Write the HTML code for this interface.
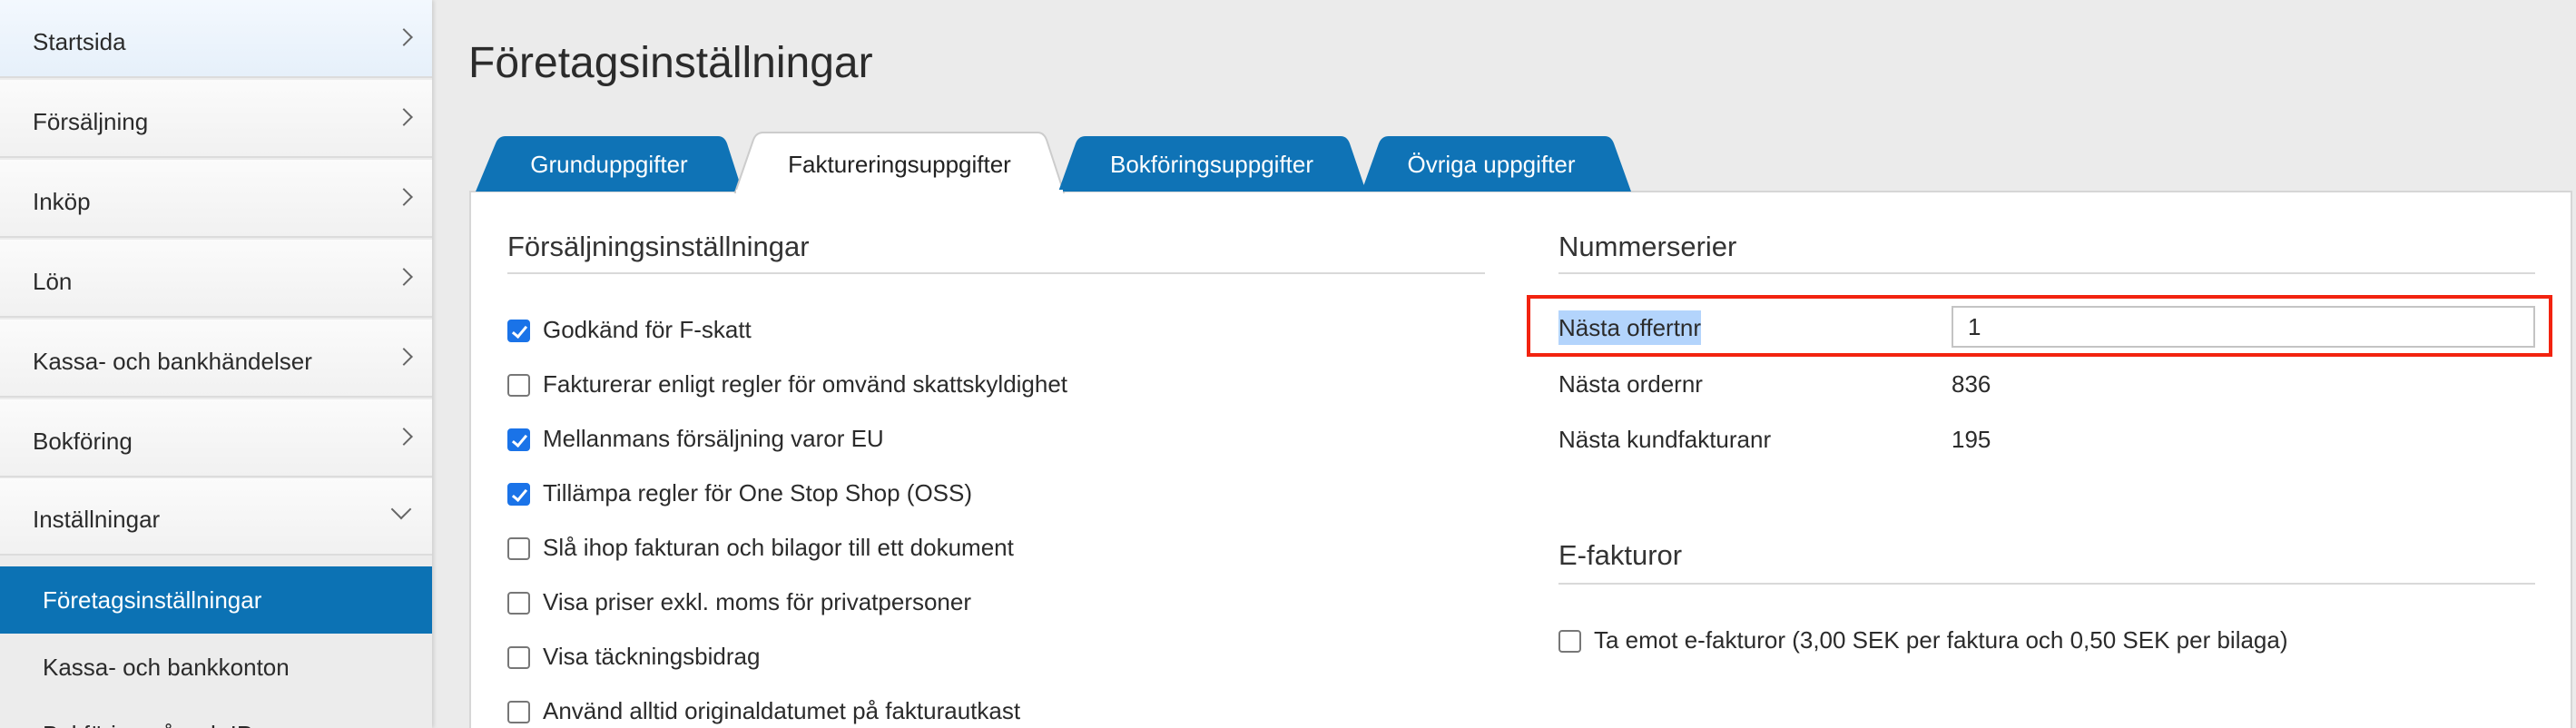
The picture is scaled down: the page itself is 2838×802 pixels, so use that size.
<!DOCTYPE html>
<html style="overflow:hidden;width:2838px;height:802px"><head><meta charset="utf-8"><style>
*{margin:0;padding:0;box-sizing:border-box}
body{width:2838px;height:802px;overflow:hidden;background:#ebebeb;font-family:"Liberation Sans",sans-serif;color:#2b2b2b;position:relative}
.sb{position:absolute;left:0;top:0;width:476px;height:802px;background:#ececec;box-shadow:2px 0 4px rgba(0,0,0,.12)}
.it{position:absolute;left:0;width:476px;height:86px;background:linear-gradient(#fbfbfb,#f1f1f1);border-bottom:2px solid #dcdcdc;font-size:26px;line-height:92px;padding-left:36px}
.it .ch{position:absolute;left:438px;top:34px;width:14px;height:14px;border-right:2px solid #666;border-top:2px solid #666;transform:rotate(45deg)}
.it .dn{position:absolute;left:434px;top:26px;width:16px;height:16px;border-right:2px solid #666;border-bottom:2px solid #666;transform:rotate(45deg)}
.act{position:absolute;left:0;top:624px;width:476px;height:74px;background:#0c72b4;color:#fff;font-size:26px;line-height:74px;padding-left:47px}
.sub{position:absolute;left:47px;top:712px;font-size:26px;line-height:46px}
.t{position:absolute;white-space:nowrap}
.panel{position:absolute;left:517px;top:210px;width:2317px;height:592px;background:#fff;border:2px solid #d6d6d6;border-bottom:none}
.h{font-size:31px;color:#333}
.hr{position:absolute;height:2px;background:#d9d9d9}
.cb{position:absolute;width:25px;height:25px;border:2px solid #777;border-radius:4px;background:#fff}
.cb.on{background:#1a73e8;border-color:#1a73e8}
.cb.on:after{content:"";position:absolute;left:7px;top:2px;width:6px;height:13px;border-right:3px solid #fff;border-bottom:3px solid #fff;transform:rotate(40deg)}
.lb{font-size:26px;color:#2b2b2b}
</style></head><body>
<div class="sb">
<div class="it" style="top:0;background:linear-gradient(#f3f8fe,#e6f0fa)">Startsida<span class="ch"></span></div>
<div class="it" style="top:88px">Försäljning<span class="ch"></span></div>
<div class="it" style="top:176px">Inköp<span class="ch"></span></div>
<div class="it" style="top:264px">Lön<span class="ch"></span></div>
<div class="it" style="top:352px">Kassa- och bankhändelser<span class="ch"></span></div>
<div class="it" style="top:440px">Bokföring<span class="ch"></span></div>
<div class="it" style="top:527px;height:85px;line-height:90px">Inställningar<span class="dn"></span></div>
<div class="act">Företagsinställningar</div>
<div class="sub">Kassa- och bankkonton</div>
<div class="sub" style="top:786px">Bokföring på ordr IP</div>
</div>
<div class="t" style="left:516px;top:42px;font-size:48px;color:#2b2b2b">Företagsinställningar</div>
<div class="panel"></div>
<svg style="position:absolute;left:0;top:0" width="2838" height="214">
<path d="M524 211 L546 158 Q549 150 557 150 L791 150 Q798 150 801 158 L818 211 Z" fill="#0f73b6"/>
<path d="M810 212 L830 154 Q833 146 841 146 L1143 146 Q1150 146 1153 154 L1172 212 Z" fill="#fff" stroke="#ccc" stroke-width="2"/>
<path d="M1166 211 L1185 158 Q1188 150 1196 150 L1477 150 Q1484 150 1487 158 L1505 211 Z" fill="#0f73b6"/>
<path d="M1500 211 L1519 158 Q1522 150 1530 150 L1768 150 Q1775 150 1778 158 L1797 211 Z" fill="#0f73b6"/>
<rect x="811" y="209" width="360" height="4" fill="#fff"/>
<text x="671" y="190" font-family="Liberation Sans" font-size="26" fill="#fff" text-anchor="middle">Grunduppgifter</text>
<text x="991" y="190" font-family="Liberation Sans" font-size="26" fill="#222" text-anchor="middle">Faktureringsuppgifter</text>
<text x="1335" y="190" font-family="Liberation Sans" font-size="26" fill="#fff" text-anchor="middle">Bokföringsuppgifter</text>
<text x="1643" y="190" font-family="Liberation Sans" font-size="26" fill="#fff" text-anchor="middle">Övriga uppgifter</text>
</svg>
<div class="t h" style="left:559px;top:254px">Försäljningsinställningar</div>
<div class="hr" style="left:559px;top:300px;width:1077px"></div>
<div class="cb on" style="left:559px;top:352px"></div><div class="t lb" style="left:598px;top:348px">Godkänd för F-skatt</div>
<div class="cb" style="left:559px;top:412px"></div><div class="t lb" style="left:598px;top:408px">Fakturerar enligt regler för omvänd skattskyldighet</div>
<div class="cb on" style="left:559px;top:472px"></div><div class="t lb" style="left:598px;top:468px">Mellanmans försäljning varor EU</div>
<div class="cb on" style="left:559px;top:532px"></div><div class="t lb" style="left:598px;top:528px">Tillämpa regler för One Stop Shop (OSS)</div>
<div class="cb" style="left:559px;top:592px"></div><div class="t lb" style="left:598px;top:588px">Slå ihop fakturan och bilagor till ett dokument</div>
<div class="cb" style="left:559px;top:652px"></div><div class="t lb" style="left:598px;top:648px">Visa priser exkl. moms för privatpersoner</div>
<div class="cb" style="left:559px;top:712px"></div><div class="t lb" style="left:598px;top:708px">Visa täckningsbidrag</div>
<div class="cb" style="left:559px;top:772px"></div><div class="t lb" style="left:598px;top:768px">Använd alltid originaldatumet på fakturautkast</div>
<div class="t h" style="left:1717px;top:254px">Nummerserier</div>
<div class="hr" style="left:1717px;top:300px;width:1076px"></div>
<div style="position:absolute;left:1682px;top:325px;width:1130px;height:68px;border:4px solid #f2230f"></div>
<div class="t lb" style="left:1717px;top:342px;height:38px;line-height:38px;background:#b3d4fc">Nästa offertnr</div>
<div style="position:absolute;left:2150px;top:337px;width:643px;height:46px;border:2px solid #c4c4c4;font-size:26px;line-height:42px;padding-left:16px">1</div>
<div class="t lb" style="left:1717px;top:408px">Nästa ordernr</div><div class="t lb" style="left:2150px;top:408px">836</div>
<div class="t lb" style="left:1717px;top:469px">Nästa kundfakturanr</div><div class="t lb" style="left:2150px;top:469px">195</div>
<div class="t h" style="left:1717px;top:594px">E-fakturor</div>
<div class="hr" style="left:1717px;top:642px;width:1076px"></div>
<div class="cb" style="left:1717px;top:694px"></div><div class="t lb" style="left:1756px;top:690px">Ta emot e-fakturor (3,00 SEK per faktura och 0,50 SEK per bilaga)</div>
</body></html>
